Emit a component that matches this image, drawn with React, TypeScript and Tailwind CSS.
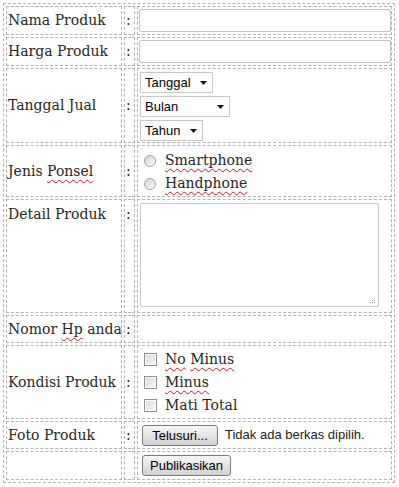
import React from "react";

const serif = { fontFamily: '"DejaVu Serif", Georgia, serif' };
const sans = { fontFamily: '"Liberation Sans", Tahoma, Arial, sans-serif' };

const Squiggle = ({ children }: { children: React.ReactNode }) => (
  <span className="underline decoration-wavy decoration-[#d0121a] decoration-[1px] underline-offset-[3px]">
    {children}
  </span>
);

const cell = "border border-dashed border-[#b4b4b4] px-[1px] py-[2px] whitespace-nowrap";

const Select = ({ label, width }: { label: string; width: string }) => (
  <div
    className={`flex items-center justify-between h-[21px] border border-[#c8c8c8] bg-white pl-[4px] pr-[5px] text-[13px] text-black ${width}`}
    style={sans}
  >
    <span>{label}</span>
    <svg width="7" height="4" viewBox="0 0 7 4">
      <path d="M0 0h7L3.5 4z" fill="#111" />
    </svg>
  </div>
);

const Radio = () => (
  <span className="inline-block w-[12px] h-[12px] rounded-full border border-[#a0a0a0] bg-gradient-to-br from-[#d4d4d4] to-[#fafafa] ml-[5px] mr-[9px]" />
);

const Check = () => (
  <span className="inline-flex items-center justify-center w-[13px] h-[13px] border border-[#8e8e8e] bg-white ml-[5px] mr-[8px]">
    <span className="block w-[9px] h-[9px] bg-gradient-to-br from-[#dcdcdc] to-[#f6f6f6]" />
  </span>
);

const Button = ({ children, width }: { children: React.ReactNode; width: string }) => (
  <button
    className={`h-[21px] ${width} rounded-[3px] border border-[#7a7a7a] bg-gradient-to-b from-[#f6f6f6] to-[#d2d2d2] text-[13px] text-black`}
    style={sans}
  >
    {children}
  </button>
);

export default function App() {
  return (
    <div className="w-[399px] h-[487px] bg-white p-[3px] text-[14px] text-[#262626]" style={serif}>
      <table className="table-fixed w-[392px] border-separate border-spacing-[2px] border border-dashed border-[#b4b4b4]">
        <colgroup>
          <col className="w-[116px]" />
          <col className="w-[11px]" />
          <col />
        </colgroup>
        <tbody>
          <tr className="h-[28px]">
            <td className={cell}>Nama Produk</td>
            <td className={cell}>:</td>
            <td className={`${cell} py-[1px]`}>
              <div className="h-[23px] w-[252px] border border-[#c4c4c4] rounded-[2px] bg-white" />
            </td>
          </tr>
          <tr className="h-[27px]">
            <td className={cell}>Harga Produk</td>
            <td className={cell}>:</td>
            <td className={`${cell} py-[1px]`}>
              <div className="h-[23px] w-[252px] border border-[#c4c4c4] rounded-[2px] bg-white" />
            </td>
          </tr>
          <tr>
            <td className={cell}>Tanggal Jual</td>
            <td className={cell}>:</td>
            <td className={`${cell} pt-[3px] pb-[1px]`}>
              <div className="flex flex-col gap-[3px] pl-[1px]">
                <Select label="Tanggal" width="w-[73px]" />
                <Select label="Bulan" width="w-[90px]" />
                <Select label="Tahun" width="w-[63px]" />
              </div>
            </td>
          </tr>
          <tr>
            <td className={cell}>
              Jenis <Squiggle>Ponsel</Squiggle>
            </td>
            <td className={cell}>:</td>
            <td className={`${cell} pt-[3px] pb-[1px]`}>
              <div className="flex items-center h-[23px]">
                <Radio />
                <Squiggle>Smartphone</Squiggle>
              </div>
              <div className="flex items-center h-[23px]">
                <Radio />
                <Squiggle>Handphone</Squiggle>
              </div>
            </td>
          </tr>
          <tr>
            <td className={`${cell} align-top pt-[4px]`}>Detail Produk</td>
            <td className={`${cell} align-top pt-[4px]`}>:</td>
            <td className={`${cell} pt-[3px] pb-[5px]`}>
              <div className="relative ml-[1px] h-[104px] w-[239px] border border-[#c8c8c8] rounded-[2px] bg-white">
                <svg className="absolute right-[2px] bottom-[2px]" width="7" height="7" viewBox="0 0 7 7">
                  <rect x="5" y="1" width="1" height="1" fill="#aaa" />
                  <rect x="3" y="3" width="1" height="1" fill="#aaa" />
                  <rect x="5" y="3" width="1" height="1" fill="#aaa" />
                  <rect x="1" y="5" width="1" height="1" fill="#aaa" />
                  <rect x="3" y="5" width="1" height="1" fill="#aaa" />
                  <rect x="5" y="5" width="1" height="1" fill="#aaa" />
                </svg>
              </div>
            </td>
          </tr>
          <tr className="h-[28px]">
            <td className={cell}>
              Nomor <Squiggle>Hp</Squiggle> anda
            </td>
            <td className={cell}>:</td>
            <td className={cell}></td>
          </tr>
          <tr>
            <td className={cell}>Kondisi Produk</td>
            <td className={cell}>:</td>
            <td className={`${cell} pt-[2px] pb-[1px]`}>
              <div className="flex items-center h-[23px]">
                <Check />
                <Squiggle>No</Squiggle>&nbsp;<Squiggle>Minus</Squiggle>
              </div>
              <div className="flex items-center h-[23px]">
                <Check />
                <Squiggle>Minus</Squiggle>
              </div>
              <div className="flex items-center h-[23px]">
                <Check />
                <span>Mati Total</span>
              </div>
            </td>
          </tr>
          <tr className="h-[28px]">
            <td className={cell}>Foto Produk</td>
            <td className={cell}>:</td>
            <td className={`${cell} py-[1px]`}>
              <div className="flex items-center gap-[7px] pl-[3px]">
                <Button width="w-[76px]">Telusuri...</Button>
                <span className="text-[13px] text-[#222]" style={sans}>
                  Tidak ada berkas dipilih.
                </span>
              </div>
            </td>
          </tr>
          <tr className="h-[29px]">
            <td className={cell}></td>
            <td className={cell}></td>
            <td className={`${cell} py-[1px]`}>
              <div className="pl-[3px]">
                <Button width="w-[89px]">Publikasikan</Button>
              </div>
            </td>
          </tr>
        </tbody>
      </table>
    </div>
  );
}
